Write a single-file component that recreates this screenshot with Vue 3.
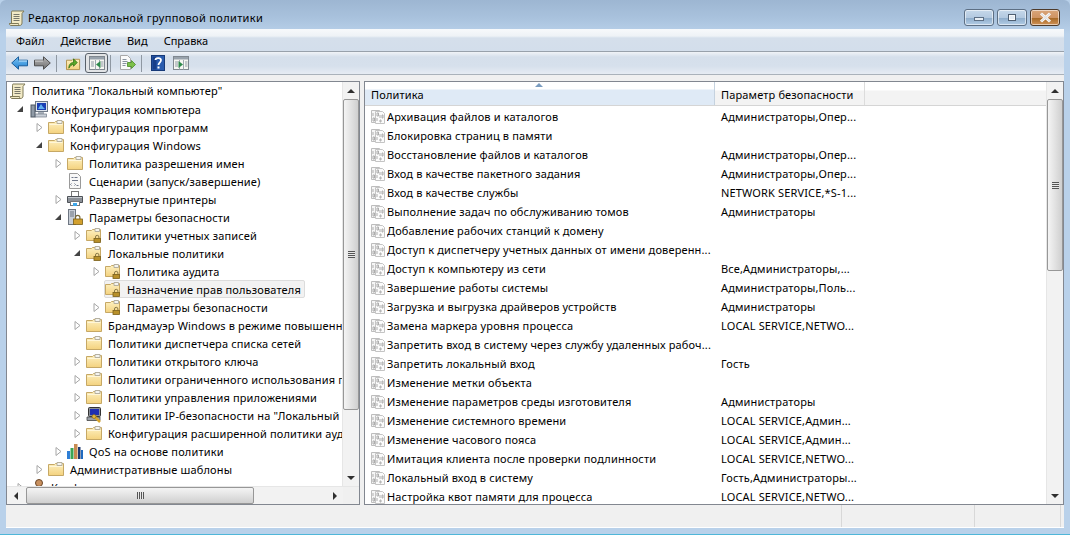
<script setup>
const tree = [
  { d: 0, e: '', i: 'i-scroll', t: 'Политика "Локальный компьютер"', root: true },
  { d: 1, e: 'o', i: 'i-comp', t: 'Конфигурация компьютера' },
  { d: 2, e: 'c', i: 'i-folder', t: 'Конфигурация программ' },
  { d: 2, e: 'o', i: 'i-folder', t: 'Конфигурация Windows' },
  { d: 3, e: 'c', i: 'i-folder', t: 'Политика разрешения имен' },
  { d: 3, e: '', i: 'i-script', t: 'Сценарии (запуск/завершение)' },
  { d: 3, e: 'c', i: 'i-printer', t: 'Развернутые принтеры' },
  { d: 3, e: 'o', i: 'i-sec', t: 'Параметры безопасности' },
  { d: 4, e: 'c', i: 'i-flock', t: 'Политики учетных записей' },
  { d: 4, e: 'o', i: 'i-flock', t: 'Локальные политики' },
  { d: 5, e: 'c', i: 'i-flock', t: 'Политика аудита' },
  { d: 5, e: '', i: 'i-flock', t: 'Назначение прав пользователя', sel: true },
  { d: 5, e: 'c', i: 'i-flock', t: 'Параметры безопасности' },
  { d: 4, e: 'c', i: 'i-folder', t: 'Брандмауэр Windows в режиме повышенной безопасности' },
  { d: 4, e: '', i: 'i-folder', t: 'Политики диспетчера списка сетей' },
  { d: 4, e: 'c', i: 'i-folder', t: 'Политики открытого ключа' },
  { d: 4, e: 'c', i: 'i-folder', t: 'Политики ограниченного использования программ' },
  { d: 4, e: 'c', i: 'i-folder', t: 'Политики управления приложениями' },
  { d: 4, e: 'c', i: 'i-ipsec', t: 'Политики IP-безопасности на "Локальный компьютер"' },
  { d: 4, e: 'c', i: 'i-folder', t: 'Конфигурация расширенной политики аудита' },
  { d: 3, e: 'c', i: 'i-qos', t: 'QoS на основе политики' },
  { d: 2, e: 'c', i: 'i-folder', t: 'Административные шаблоны' },
  { d: 1, e: 'c', i: 'i-user', t: 'Конфигурация пользователя' },
]
const rows = [
  ['Архивация файлов и каталогов', 'Администраторы,Опер...'],
  ['Блокировка страниц в памяти', ''],
  ['Восстановление файлов и каталогов', 'Администраторы,Опер...'],
  ['Вход в качестве пакетного задания', 'Администраторы,Опер...'],
  ['Вход в качестве службы', 'NETWORK SERVICE,*S-1...'],
  ['Выполнение задач по обслуживанию томов', 'Администраторы'],
  ['Добавление рабочих станций к домену', ''],
  ['Доступ к диспетчеру учетных данных от имени доверенн...', ''],
  ['Доступ к компьютеру из сети', 'Все,Администраторы,...'],
  ['Завершение работы системы', 'Администраторы,Поль...'],
  ['Загрузка и выгрузка драйверов устройств', 'Администраторы'],
  ['Замена маркера уровня процесса', 'LOCAL SERVICE,NETWO...'],
  ['Запретить вход в систему через службу удаленных рабоч...', ''],
  ['Запретить локальный вход', 'Гость'],
  ['Изменение метки объекта', ''],
  ['Изменение параметров среды изготовителя', 'Администраторы'],
  ['Изменение системного времени', 'LOCAL SERVICE,Админ...'],
  ['Изменение часового пояса', 'LOCAL SERVICE,Админ...'],
  ['Имитация клиента после проверки подлинности', 'LOCAL SERVICE,NETWO...'],
  ['Локальный вход в систему', 'Гость,Администраторы...'],
  ['Настройка квот памяти для процесса', 'LOCAL SERVICE,NETWO...'],
]
const menu = ['Файл', 'Действие', 'Вид', 'Справка']
</script>

<template>
  <div class="win">
    <svg class="sprite" width="0" height="0">
      <defs>
        <linearGradient id="gf" x1="0" y1="0" x2="0" y2="1"><stop offset="0" stop-color="#fdf0c0"/><stop offset="1" stop-color="#f4d27e"/></linearGradient>
        <linearGradient id="gb" x1="0" y1="0" x2="0" y2="1"><stop offset="0" stop-color="#7cc6f5"/><stop offset="1" stop-color="#1f7fd0"/></linearGradient>
        <linearGradient id="gg" x1="0" y1="0" x2="0" y2="1"><stop offset="0" stop-color="#b5b5b5"/><stop offset="1" stop-color="#6f6f6f"/></linearGradient>
        <symbol id="i-folder" viewBox="0 0 16 16">
          <path d="M.5 3.500h6l1-1h8v12H.5z" fill="url(#gf)" stroke="#c6a865"/>
          <path d="M9 1.500h5v3H9z" fill="#f4f4f0" stroke="#b5b0a0"/>
          <path d="M1.500 5.500h13" stroke="#fff6d8"/>
        </symbol>
        <symbol id="i-flock" viewBox="0 0 16 16">
          <path d="M.5 3.500h5l1-1h8v11H.5z" fill="url(#gf)" stroke="#c6a865"/>
          <path d="M9 1.500h4.500v3H9z" fill="#f4f4f0" stroke="#b5b0a0"/>
          <path d="M9.500 11.500V10a1.700 1.700 0 0 1 3.400 0v1.500" fill="none" stroke="#8a7a4a" stroke-width="1"/>
          <rect x="8" y="11.500" width="6.500" height="4" fill="#b8902a" stroke="#7a5f18" stroke-width=".8"/>
        </symbol>
        <symbol id="i-scroll" viewBox="0 0 16 16">
          <path d="M3 1h12l-2 2.500v9.500c0 1.500-1 2.500-2.500 2.500H2c-1 0-1.700-1-1.700-2h2.200V3c0-1 0-2 .5-2z" fill="#f2eac6" stroke="#7f7a58"/>
          <path d="M.5 13.500h9c0 1 .3 2 1 2" fill="none" stroke="#7f7a58"/>
          <path d="M4.500 4.500h6M4.500 6.500h6M4.500 8.500h6M4.500 10.500h6" stroke="#77776a"/>
        </symbol>
        <symbol id="i-comp" viewBox="0 0 18 18">
          <rect x="5.500" y="1.500" width="12" height="10" fill="#dfe5ec" stroke="#6f7a88"/>
          <rect x="7" y="3" width="9" height="7" fill="#1a3fb5"/>
          <path d="M8 9l3-5 2 3 2 2z" fill="#5fb0f0"/>
          <rect x="1" y="5" width="4" height="12" fill="#8f9aa6" stroke="#4f5864"/>
          <rect x="8" y="12" width="6" height="2" fill="#aab2bc"/>
          <rect x="5.500" y="14" width="11" height="3" fill="#c9d0d8" stroke="#6f7a88" stroke-width=".7"/>
        </symbol>
        <symbol id="i-script" viewBox="0 0 16 16">
          <path d="M2.500.5h8l3 3v12h-11z" fill="#f8f8f8" stroke="#9a9a9a"/>
          <path d="M4.500 4.500h2M7.500 4.500h3M5 7.500h6M4.500 10.500l-1 1 1 1M7.500 10.500l1 1-1 1M9.500 12.500h2" stroke="#70788a" fill="none"/>
        </symbol>
        <symbol id="i-printer" viewBox="0 0 16 16">
          <rect x="4.500" y=".5" width="7" height="5" fill="#fff" stroke="#777"/>
          <path d="M.5 5.500h15v6H.5z" fill="#8b9097" stroke="#4e5258"/>
          <path d="M1 6.500h14" stroke="#c4c8cd"/>
          <rect x="3.500" y="10.500" width="9" height="4" fill="#fff" stroke="#777"/>
          <rect x="6" y="12" width="4" height="3" fill="#3fa6e8"/>
        </symbol>
        <symbol id="i-sec" viewBox="0 0 16 16">
          <rect x="1.500" y=".5" width="7" height="15" fill="#c8ced6" stroke="#6e7682"/>
          <path d="M3 3h4M3 5h4M3 7h4" stroke="#6e7682"/>
          <path d="M8.500 10V8.500a2.200 2.200 0 0 1 4.400 0V10" fill="none" stroke="#7a6a3a" stroke-width="1.200"/>
          <rect x="6.500" y="10" width="9" height="5.500" fill="#d2a02e" stroke="#7a5f18" stroke-width=".8"/>
        </symbol>
        <symbol id="i-ipsec" viewBox="0 0 16 16">
          <rect x="2.500" y=".5" width="12" height="9" rx="1" fill="#8a8f96" stroke="#333"/>
          <rect x="4" y="2" width="9" height="6" fill="#1f2fb0"/>
          <path d="M1 10h13v3.500H1z" fill="#9aa0a8" stroke="#444" stroke-width=".8"/>
          <path d="M8 9l6 6" stroke="#d7a52c" stroke-width="2.500"/>
          <circle cx="8" cy="9.500" r="2" fill="#e3b73b" stroke="#7a5f18" stroke-width=".6"/>
        </symbol>
        <symbol id="i-qos" viewBox="0 0 16 16">
          <rect x="0" y="8" width="3" height="8" fill="#2f7fd6"/>
          <rect x="3.500" y="5" width="3" height="11" fill="#3aa655"/>
          <rect x="7" y="1" width="3.500" height="15" fill="#c88b52"/>
          <rect x="11" y="4" width="2.500" height="12" fill="#1f3a70"/>
          <rect x="14" y="7" width="2" height="9" fill="#1f6ac0"/>
        </symbol>
        <symbol id="i-user" viewBox="0 0 18 18">
          <circle cx="9" cy="5" r="3.500" fill="#c8905f" stroke="#6a4628"/>
          <path d="M3 16c0-5 3-6 6-6s6 1 6 6z" fill="#7f8fa8" stroke="#4a5568"/>
        </symbol>
        <symbol id="i-pol" viewBox="0 0 16 16">
          <path d="M1.500 1.500h8l2 2v10h-10z" fill="#f6f6f6" stroke="#bdbdbd"/>
          <path d="M5.500 2.500h7l2 2v10h-9z" fill="#fbfbfb" stroke="#c4c4c4"/>
          <path d="M3 4v3M3 9h1.500v3H3zM7 4h1.500v3H7zM7 9v3M10 6v3M12 6h1v3h-1zM10 11h1v2h-1z" fill="none" stroke="#adadad"/>
        </symbol>
        <symbol id="i-back" viewBox="0 0 17 14">
          <path d="M.7 7L7.500.8v3.400h9v5.600h-9v3.400z" fill="url(#gb)" stroke="#1a5d9a"/>
          <path d="M8 5h8" stroke="#c5e8ff"/>
        </symbol>
        <symbol id="i-fwd" viewBox="0 0 17 14">
          <path d="M16.300 7L9.500.8v3.400h-9v5.600h9v3.400z" fill="url(#gg)" stroke="#4d4d4d"/>
          <path d="M1 5h8" stroke="#d8d8d8"/>
        </symbol>
        <symbol id="i-up" viewBox="0 0 16 16">
          <path d="M.5 4.500h6l1-1h7v11H.5z" fill="url(#gf)" stroke="#b08f48"/>
          <path d="M3 13c0-4 2-6 5-6V3l4 4-4 4V9c-2 0-3.500 1.500-5 4z" fill="#5aa92a" stroke="#2f6d12" stroke-width=".8"/>
        </symbol>
        <symbol id="i-pane" viewBox="0 0 16 14">
          <rect x=".5" y=".5" width="15" height="13" fill="#f6f6f2" stroke="#808890"/>
          <rect x="1" y="1" width="14" height="2.500" fill="#98a2ac"/>
          <path d="M6.500 4v9.500M10.500 4v9.500" stroke="#a0a8b0"/>
          <path d="M2 6h3M2 8h3M2 10h3M12 6h2.500M12 8h2.500M12 10h2.500" stroke="#909aa4"/>
        </symbol>
        <symbol id="i-export" viewBox="0 0 17 16">
          <path d="M1.500.5h7l3 3v11h-10z" fill="#fafafa" stroke="#a8a8a8"/>
          <path d="M3.500 4.500h4M3.500 6.500h5M3.500 8.500h4M3.500 10.500h3" stroke="#8a94a0"/>
          <path d="M16.500 9.500l-4-4v2h-4v4h4v2z" fill="#7cc04a" stroke="#4a8a26" stroke-width=".8"/>
        </symbol>
        <symbol id="i-help" viewBox="0 0 14 16">
          <rect x=".5" y=".5" width="13" height="15" fill="#2a5cae" stroke="#173a78"/>
          <path d="M1.500 1.500h4v13h-4z" fill="#173f8a"/>
          <path d="M4.500 5c0-2 5-3 5.500 0 .3 2-2.500 2.500-2.500 5" fill="none" stroke="#fff" stroke-width="1.800"/>
          <rect x="6.500" y="11.500" width="2" height="2" fill="#fff"/>
        </symbol>
      </defs>
    </svg>

    <header class="title">
      <svg class="ticon"><use href="#i-scroll"/></svg>
      <span class="ttext">Редактор локальной групповой политики</span>
      <div class="caps">
        <div class="cap"><i class="minbar"></i></div>
        <div class="cap"><i class="maxbox"></i></div>
        <div class="cap close"><svg width="13" height="11" viewBox="0 0 13 11"><path d="M2 1.500l9 8M11 1.500l-9 8" stroke="#fff" stroke-width="3"/><path d="M2 1.500l9 8M11 1.500l-9 8" stroke="#e0e0e0" stroke-width="1.500"/></svg></div>
      </div>
    </header>

    <nav class="menu">
      <span v-for="m in menu" :key="m" class="mi">{{ m }}</span>
    </nav>

    <div class="tools">
      <svg class="t back"><use href="#i-back"/></svg>
      <svg class="t fwd"><use href="#i-fwd"/></svg>
      <i class="sep s1"></i>
      <svg class="t up"><use href="#i-up"/></svg>
      <div class="toggle">
        <svg class="t pane"><use href="#i-pane"/></svg>
        <svg class="tri-in" width="5" height="7" viewBox="0 0 5 7"><path d="M4.500 0v7L0 3.500z" fill="#2e8a4a"/></svg>
      </div>
      <i class="sep s2"></i>
      <svg class="t exp"><use href="#i-export"/></svg>
      <i class="sep s3"></i>
      <svg class="t help"><use href="#i-help"/></svg>
      <div class="pwrap">
        <svg class="t pane2"><use href="#i-pane"/></svg>
        <svg class="tri-out" width="5" height="7" viewBox="0 0 5 7"><path d="M.5 0v7L5 3.500z" fill="#2e8a4a"/></svg>
      </div>
    </div>

    <main class="panes">
      <section class="left">
        <div class="ltop">
          <div class="tree">
            <div v-for="r in tree" :key="r.t + r.d" class="row" :class="{ rootrow: r.root }" :style="{ paddingLeft: 19 * r.d + 3 + 'px' }">
              <span class="ex">
                <svg v-if="r.e === 'c'" width="7" height="9" viewBox="0 0 7 9"><path d="M1 .5l5 4-5 4z" fill="#fff" stroke="#a6a6a6"/></svg>
                <svg v-if="r.e === 'o'" width="8" height="8" viewBox="0 0 8 8"><path d="M7 1v6H1z" fill="#444"/></svg>
              </span>
              <span class="lab" :class="{ sel: r.sel, big: r.d === 1 }">
                <svg class="ic"><use :href="'#' + r.i"/></svg>
                <span class="tx">{{ r.t }}</span>
              </span>
            </div>
          </div>
          <div class="vbar">
            <div class="btn"><i class="au"></i></div>
            <div class="thumb vt lt"><i class="grip"></i></div>
            <div class="fill"></div>
            <div class="btn"><i class="ad"></i></div>
          </div>
        </div>
        <div class="hbar">
          <div class="hbtn"><i class="al"></i></div>
          <div class="hthumb"><i class="hgrip"></i></div>
          <div class="fill"></div>
          <div class="hbtn"><i class="ar"></i></div>
          <div class="corner"></div>
        </div>
      </section>

      <section class="right">
        <div class="list">
          <div class="head">
            <div class="hc c1"><span class="sort"></span>Политика</div>
            <div class="hc c2">Параметр безопасности</div>
          </div>
          <div class="lrows">
            <div v-for="r in rows" :key="r[0]" class="lr">
              <svg class="pi"><use href="#i-pol"/></svg>
              <span class="n">{{ r[0] }}</span>
              <span class="v">{{ r[1] }}</span>
            </div>
          </div>
        </div>
        <div class="vbar rv">
          <div class="btn"><i class="au"></i></div>
          <div class="thumb vt rt"><i class="grip"></i></div>
          <div class="fill"></div>
          <div class="btn"><i class="ad"></i></div>
        </div>
      </section>
    </main>

    <footer class="status">
      <div class="st s-a"></div>
      <div class="st s-b"></div>
      <div class="st s-c"></div>
    </footer>
  </div>
</template>

<style>
html, body { margin: 0; background: #b9d1ea; overflow: hidden; }
</style>

<style scoped>
.win {
  width: 1070px; height: 535px; box-sizing: border-box; overflow: hidden;
  display: flex; flex-direction: column;
  padding: 0 6px 6px;
  border-radius: 6px 6px 0 0;
  background: linear-gradient(180deg, #9db6d2 0, #a9c2dd 18px, #b9d1ea 34px);
  border-bottom: 1px solid #4fb6d8;
  font: 11px "Noto Sans", sans-serif;
  letter-spacing: .15px;
  color: #000;
}
.sprite { position: absolute; }
.title { height: 29px; flex: none; display: flex; align-items: center; padding-top: 6px; box-sizing: border-box; }
.ticon { width: 16px; height: 16px; margin: 0 3px 0 3px; }
.ttext { font-size: 11px; letter-spacing: .34px; color: #000; }
.caps { margin-left: auto; display: flex; gap: 3px; margin-right: 4px; }
.cap {
  width: 28px; height: 15px; border: 1px solid #5d6f84; border-radius: 3px;
  background: linear-gradient(180deg, #c6d8ea 0, #b3c9e0 50%, #8fadcb 55%, #b3cde6 100%);
  box-shadow: inset 0 0 0 1px rgba(255,255,255,.55);
  display: flex; align-items: center; justify-content: center;
}
.close { background: linear-gradient(180deg, #d9a57a 0, #cf9463 50%, #a86a28 55%, #d09257 100%); border-color: #4d3a2a; }
.minbar { width: 8px; height: 2px; background: #e8eef4; border: 1px solid #5d6f84; margin-top: 2px; }
.maxbox { width: 6px; height: 5px; border: 1px solid #4f5f72; background: #e4ebf2; box-shadow: inset 0 0 0 1px #f7f9fb; }

.menu {
  height: 22px; flex: none; display: flex; padding-left: 2px; align-items: center;
  background: linear-gradient(180deg, #f7f9fb 0, #eef2f6 7px, #d5dfeb 9px, #d3deeb 100%);
  border-bottom: 1px solid #98a1ab;
  letter-spacing: 0;
}
.mi { padding: 0 8px; }

.tools {
  height: 22px; flex: none; display: flex; align-items: center; position: relative;
  background: linear-gradient(180deg, #f0f3f7 0, #d5dfeb 5px, #d6e0ec 14px, #e6ecf3 100%);
  border-bottom: 1px solid #aab2ba;
}
.t { flex: none; }
.back { width: 17px; height: 14px; margin-left: 5px; }
.fwd { width: 17px; height: 14px; margin-left: 6px; }
.sep { width: 1px; height: 17px; background: #8f98a2; flex: none; }
.s1 { margin-left: 5px; }
.up { width: 15px; height: 15px; margin-left: 9px; }
.toggle {
  width: 21px; height: 18px; margin-left: 4px; border: 1px solid #59616a; border-radius: 3px;
  background: #e2e4e6; display: flex; align-items: center; justify-content: center; position: relative; flex: none;
}
.pane { width: 16px; height: 14px; }
.tri-in { position: absolute; left: 10px; top: 7px; }
.pwrap { position: relative; margin-left: 8px; width: 16px; height: 14px; display: flex; }
.tri-out { position: absolute; left: 5px; top: 5px; }
.s2 { margin-left: 2px; }
.exp { width: 17px; height: 16px; margin-left: 8px; }
.s3 { margin-left: 5px; }
.help { width: 14px; height: 16px; margin-left: 9px; }
.pane2 { width: 16px; height: 14px; }

.panes {
  flex: 1; min-height: 0; display: flex; gap: 4px;
  background: #f0f0f0; padding-top: 6px;
}
.left, .right { border: 1px solid #828790; background: #fff; box-sizing: border-box; min-width: 0; }
.left { width: 354px; flex: none; display: flex; flex-direction: column; }
.right { flex: 1; display: flex; }
.ltop { flex: 1; min-height: 0; display: flex; }
.tree { flex: 1; min-width: 0; overflow: hidden; }
.row { height: 18px; display: flex; align-items: center; white-space: nowrap; box-sizing: border-box; }
.rootrow { height: 17px; margin-bottom: 1px; }
.ex { width: 10px; height: 10px; margin: 0 4px 0 -14px; flex: none; display: flex; align-items: center; justify-content: center; }
.lab { display: inline-flex; align-items: center; height: 18px; box-sizing: border-box; border: 1px solid transparent; border-radius: 2px; margin-left: -1px; padding-right: 3px; }
.lab.sel { background: #f2f2f2; border-color: #dcdcdc; }
.ic { width: 16px; height: 16px; flex: none; }
.tx { margin-left: 6px; }
.lab.big .ic { width: 18px; height: 18px; margin-left: 1px; }
.lab.big .tx { margin-left: 3px; }

.vbar { width: 16px; flex: none; display: flex; flex-direction: column; background: #f2f2f2; border-left: 1px solid #e6e6e6; }
.btn { height: 17px; flex: none; display: flex; align-items: center; justify-content: center; }
.fill { flex: 1; }
.au { width: 0; height: 0; border: 4px solid transparent; border-top: 0; border-bottom: 4px solid #303030; }
.ad { width: 0; height: 0; border: 4px solid transparent; border-bottom: 0; border-top: 4px solid #303030; }
.thumb {
  box-sizing: border-box; margin: 0 0; border: 1px solid #979797; border-radius: 2px;
  background: linear-gradient(90deg, #f4f4f4, #e2e2e2 50%, #cfcfcf);
  display: flex; align-items: center; justify-content: center; flex: none;
}
.lt { height: 311px; }
.rt { height: 172px; }
.grip { width: 7px; height: 7px; background: repeating-linear-gradient(180deg, #555 0 1px, #e8e8e8 1px 2px); }
.hbar { height: 17px; flex: none; display: flex; background: #f2f2f2; border-top: 1px solid #e6e6e6; }
.hbtn { width: 17px; flex: none; display: flex; align-items: center; justify-content: center; }
.al { width: 0; height: 0; border: 4px solid transparent; border-left: 0; border-right: 4px solid #303030; }
.ar { width: 0; height: 0; border: 4px solid transparent; border-right: 0; border-left: 4px solid #303030; }
.hthumb {
  width: 228px; flex: none; box-sizing: border-box; border: 1px solid #979797; border-radius: 2px; margin-left: 2px;
  background: linear-gradient(180deg, #f4f4f4, #e2e2e2 50%, #cfcfcf);
  display: flex; align-items: center; justify-content: center;
}
.hgrip { width: 7px; height: 7px; background: repeating-linear-gradient(90deg, #555 0 1px, #e8e8e8 1px 2px); }
.corner { width: 16px; flex: none; background: #f0f0f0; }

.list { flex: 1; min-width: 0; display: flex; flex-direction: column; overflow: hidden; }
.head { height: 23px; flex: none; display: flex; border-bottom: 1px solid #d5d5d5; background: linear-gradient(180deg, #fff 0, #fff 8px, #f3f3f3 9px, #f3f3f3 100%); }
.hc { display: flex; align-items: flex-end; padding: 0 5px 3px 6px; box-sizing: border-box; position: relative; white-space: nowrap; }
.c1 { width: 350px; background: linear-gradient(180deg, #fff 0, #fff 7px, #dfeaf6 8px, #dfeaf6 100%); border-right: 1px solid #c5d2df; }
.c2 { width: 150px; border-right: 1px solid #dcdcdc; }
.sort { position: absolute; left: 170px; top: 1px; width: 0; height: 0; border: 4px solid transparent; border-top: 0; border-bottom: 4px solid #7a9cc0; }
.lrows { flex: 1; overflow: hidden; padding-top: 1px; }
.lr { height: 19px; display: flex; align-items: center; white-space: nowrap; }
.pi { width: 16px; height: 16px; margin-left: 5px; flex: none; }
.n { width: 329px; margin-left: 1px; overflow: hidden; flex: none; }
.v { margin-left: 5px; }

.status { height: 22px; flex: none; display: flex; background: #f0f0f0; border-bottom: 1px solid #fff; }
.st { box-sizing: border-box; border-right: 1px solid #d8d8d8; height: 100%; }
.s-a { width: 836px; }
.s-b { width: 133px; }
.s-c { width: 86px; }
</style>
